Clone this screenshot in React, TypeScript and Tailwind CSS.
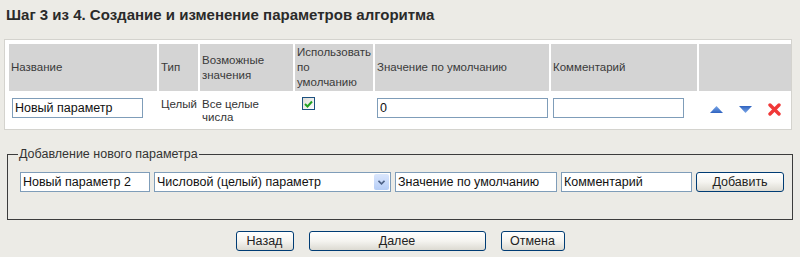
import React from 'react';

const font = "font-['Liberation_Sans',Arial,sans-serif]";
const inputCls = "h-[20px] border border-[#7f9db9] bg-white px-[2px] text-[12.5px] text-[#111] outline-none";
const btnCls = "h-[20px] rounded-[3px] border border-[#003c74] bg-gradient-to-b from-white via-[#f5f4f0] to-[#dcdad2] text-[12.5px] text-[#222]";

function Triangle({ down = false }: { down?: boolean }) {
  return (
    <svg width="13" height="7" viewBox="0 0 13 7">
      <defs>
        <linearGradient id={down ? 'gd' : 'gu'} x1="0" y1="0" x2="0" y2="1">
          <stop offset="0" stopColor={down ? '#2f63c0' : '#7aa7e8'} />
          <stop offset="1" stopColor={down ? '#7aa7e8' : '#2f63c0'} />
        </linearGradient>
      </defs>
      <polygon points={down ? '0,0 13,0 6.5,7' : '0,7 13,7 6.5,0'} fill={`url(#${down ? 'gd' : 'gu'})`} />
    </svg>
  );
}

function Cross() {
  return (
    <svg width="13" height="13" viewBox="0 0 13 13">
      <path d="M2 2 L11 11 M11 2 L2 11" stroke="#f03838" strokeWidth="3.4" strokeLinecap="round" />
    </svg>
  );
}

function Checkbox() {
  return (
    <span className="flex h-[13px] w-[13px] items-center justify-center border border-[#1c5180] bg-gradient-to-br from-[#dcdcd7] to-white">
      <svg width="9" height="8" viewBox="0 0 9 8">
        <path d="M1 4 L3.5 6.5 L8 1.5" stroke="#21a121" strokeWidth="2" fill="none" />
      </svg>
    </span>
  );
}

const headers = ['Название', 'Тип', 'Возможные значения', 'Использовать по умолчанию', 'Значение по умолчанию', 'Комментарий', ''];

export default function App() {
  return (
    <div className={`w-[800px] h-[257px] overflow-hidden bg-[#ecebe6] ${font}`}>
      <h1 className="pt-[6px] pl-[6px] text-[15px] font-bold leading-[18px] text-[#2a2a2a]">
        Шаг 3 из 4. Создание и изменение параметров алгоритма
      </h1>

      <div className="ml-[4px] mt-[15px] w-[788px] border border-[#d4d3ce] bg-white px-[4px] pt-[4px] pb-[5px]">
        <div className="grid grid-cols-[148px_39px_93px_78px_174px_146px_92px] gap-x-[2px]">
          {headers.map((h, i) => (
            <div key={i} className="flex h-[47px] items-center bg-[#d4d4d4] px-[2px] text-[11.5px] leading-[15px] text-[#3a3a3a]">
              {i === 3 ? (
                <span>Использовать<br />по<br />умолчанию</span>
              ) : i === 2 ? (
                <span>Возможные<br />значения</span>
              ) : h}
            </div>
          ))}

          <div className="pt-[4px] pl-[3px]">
            <input className={`${inputCls} w-[131px]`} defaultValue="Новый параметр" />
          </div>
          <div className="pt-[7px] pl-[2px] text-[11.5px] leading-[13px] text-[#333]">Целый</div>
          <div className="pt-[7px] pl-[2px] text-[11.5px] leading-[13px] text-[#333]">
            Все целые<br />числа
          </div>
          <div className="pt-[6px] pl-[7px]">
            <Checkbox />
          </div>
          <div className="pt-[4px] pl-[2px]">
            <input className={`${inputCls} w-[171px]`} defaultValue="0" />
          </div>
          <div className="pt-[4px] pl-[2px]">
            <input className={`${inputCls} w-[131px]`} defaultValue="" />
          </div>
          <div className="flex items-center gap-[16px] pl-[11px] pt-[3px] h-[33px]">
            <Triangle />
            <Triangle down />
            <Cross />
          </div>
        </div>
      </div>

      <fieldset className="ml-[7px] mt-[17px] w-[786px] border border-[#3c3c3c] pl-[12px] pt-[10px] pb-[27px]">
        <legend className="ml-[-2px] px-[1px] text-[12.5px] leading-[15px] text-[#333]">Добавление нового параметра</legend>
        <div className="flex items-center gap-[4px]">
          <input className={`${inputCls} w-[130px]`} defaultValue="Новый параметр 2" />
          <div className="flex h-[20px] w-[237px] items-center border border-[#7f9db9] bg-white pl-[2px]">
            <span className="flex-1 text-[12.5px] text-[#111]">Числовой (целый) параметр</span>
            <span className="m-[1px] flex h-[16px] w-[15px] items-center justify-center rounded-[2px] bg-gradient-to-b from-[#dbe7fd] to-[#b5cdf6]">
              <svg width="7" height="5" viewBox="0 0 7 5">
                <path d="M0.5 0.8 L3.5 3.8 L6.5 0.8" stroke="#4d6185" strokeWidth="1.6" fill="none" />
              </svg>
            </span>
          </div>
          <input className={`${inputCls} w-[162px]`} defaultValue="Значение по умолчанию" />
          <input className={`${inputCls} w-[131px]`} defaultValue="Комментарий" />
          <button className={`${btnCls} w-[88px]`}>Добавить</button>
        </div>
      </fieldset>

      <div className="mt-[11px] flex justify-center gap-[15px]">
        <button className={`${btnCls} w-[58px]`}>Назад</button>
        <button className={`${btnCls} w-[177px]`}>Далее</button>
        <button className={`${btnCls} w-[64px]`}>Отмена</button>
      </div>
    </div>
  );
}
